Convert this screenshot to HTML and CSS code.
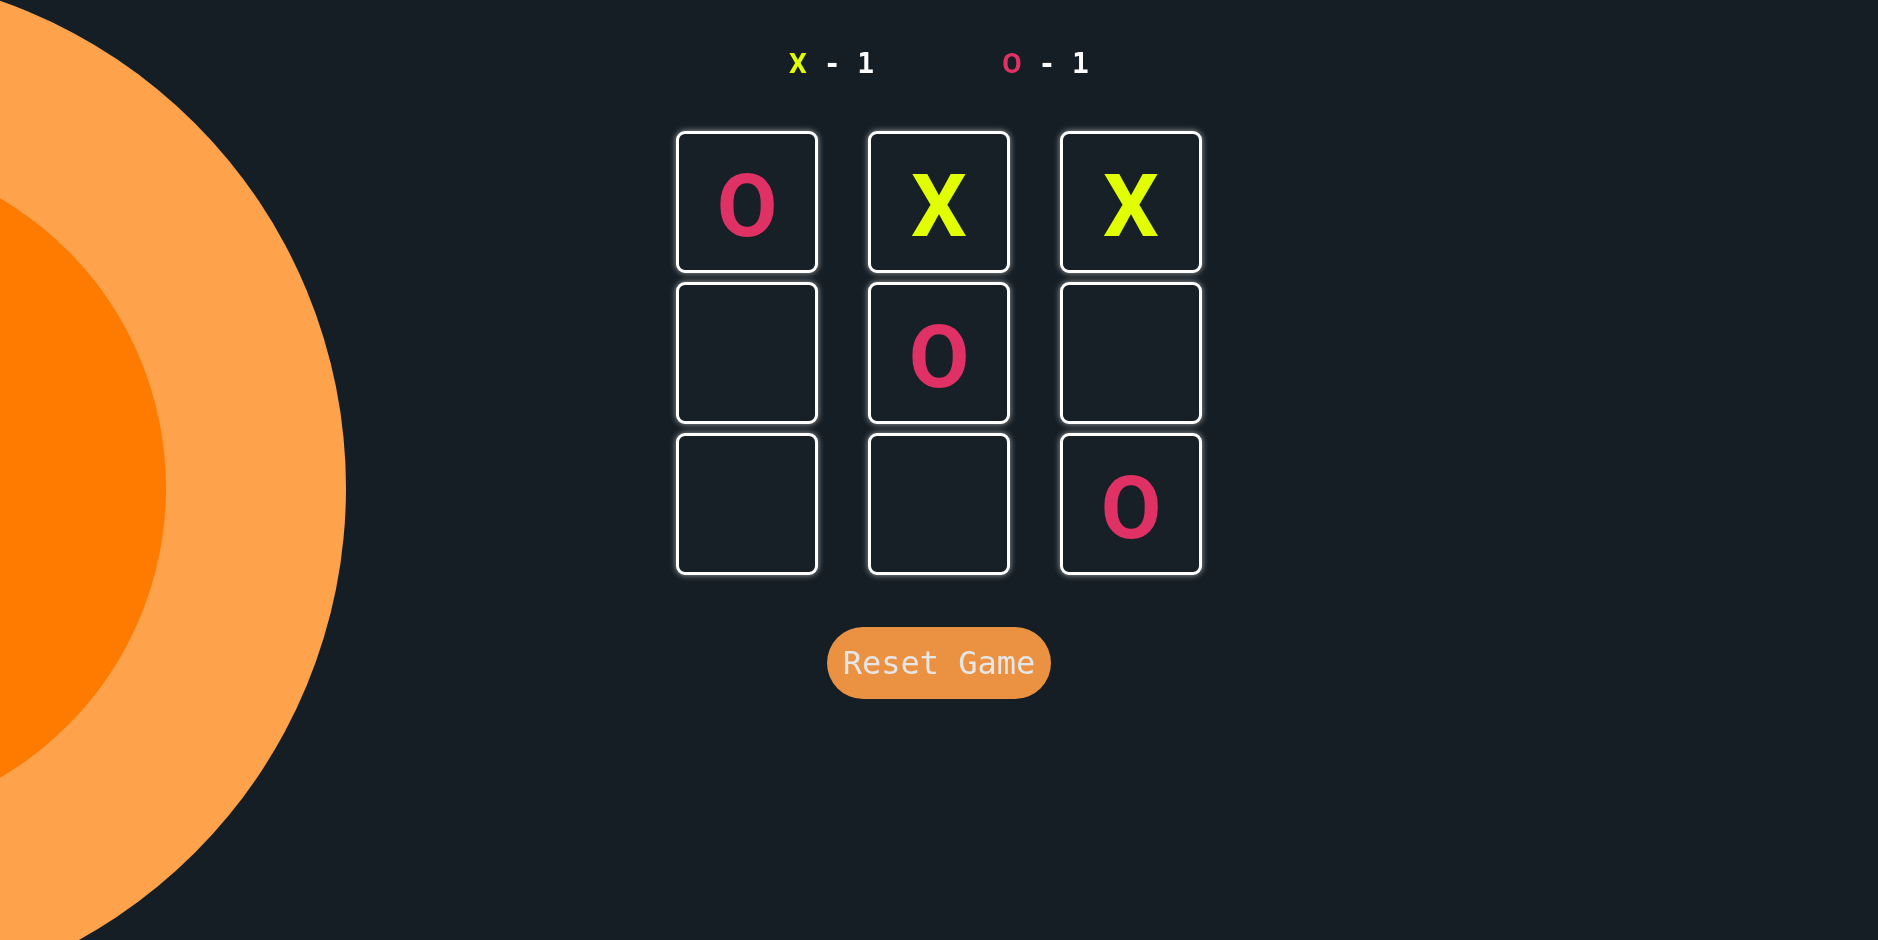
FILE: index.html
```html
<!DOCTYPE html>
<html>
<head>
<meta charset="utf-8">
<link rel="stylesheet" href="styles.css">
</head>
<body>
<div class="backdrop">
  <div class="sun sun-outer"></div>
  <div class="sun sun-inner"></div>
</div>
<main class="game">
  <div class="scores">
    <span class="score"><span class="mark x">X</span> - 1</span>
    <span class="score"><span class="mark o">O</span> - 1</span>
  </div>
  <div class="board">
    <div class="cell o">O</div>
    <div class="cell x">X</div>
    <div class="cell x">X</div>
    <div class="cell"></div>
    <div class="cell o">O</div>
    <div class="cell"></div>
    <div class="cell"></div>
    <div class="cell"></div>
    <div class="cell o">O</div>
  </div>
  <button class="reset">Reset Game</button>
</main>
</body>
</html>
```
FILE: styles.css
```css
html, body {
  margin: 0;
  padding: 0;
  height: 100%;
  overflow: hidden;
}
body {
  background: #151e25;
  font-family: "DejaVu Sans Mono", monospace;
  position: relative;
}
.backdrop {
  position: fixed;
  inset: 0;
  overflow: hidden;
}
.sun {
  position: absolute;
  border-radius: 50%;
}
.sun-outer {
  width: 1032px;
  height: 1032px;
  left: -686px;
  top: -28px;
  background: #ffa24c;
}
.sun-inner {
  width: 672px;
  height: 672px;
  left: -506px;
  top: 152px;
  background: #ff7b00;
}
.game {
  position: relative;
  display: flex;
  flex-direction: column;
  align-items: center;
  padding-top: 46px;
}
.scores {
  display: flex;
  gap: 128px;
  font-size: 28px;
  font-weight: bold;
  color: #ffffff;
  line-height: 36px;
  white-space: pre;
}
.mark {
  font-family: Roboto, sans-serif;
}
.x { color: #e1ff00; }
.o { color: #e03164; }
.board {
  margin-top: 49px;
  display: grid;
  grid-template-columns: repeat(3, 142px);
  grid-auto-rows: 142px;
  column-gap: 50px;
  row-gap: 9px;
}
.cell {
  box-sizing: border-box;
  border: 3px solid #ffffff;
  border-radius: 9px;
  background: #172027;
  box-shadow: 0 0 6px rgba(255,255,255,0.6);
  display: flex;
  align-items: center;
  justify-content: center;
  font-family: Roboto, sans-serif;
  font-size: 88px;
  font-weight: bold;
  line-height: 1;
  padding-top: 8px;
}
.reset {
  margin-top: 52px;
  height: 72px;
  padding: 0 16px;
  border: none;
  border-radius: 36px;
  background: #eb9242;
  color: #e6e6e6;
  font-family: "DejaVu Sans Mono", monospace;
  font-size: 32px;
}
```
